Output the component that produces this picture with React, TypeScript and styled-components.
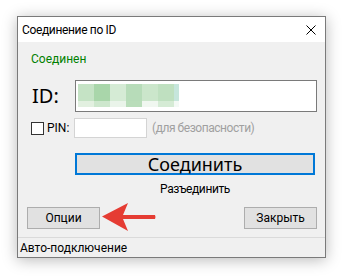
import React from 'react';
import styled, { createGlobalStyle } from 'styled-components';

const GlobalStyle = createGlobalStyle`
    html, body {
        margin: 0;
        padding: 0;
        background: #ffffff;
    }
    body {
        width: 347px;
        height: 280px;
        overflow: hidden;
        font-family: Roboto, "Noto Sans", sans-serif;
        font-size: 12px;
        color: #000;
    }
`;

const Page = styled.div`
    position: relative;
    width: 347px;
    height: 280px;
    padding: 16px 0 0 17px;
    box-sizing: border-box;
`;

const Window = styled.div`
    width: 309px;
    height: 242px;
    box-sizing: border-box;
    border: 1px solid #7a7a7a;
    background: #f0f0f0;
    box-shadow: 0 2px 14px rgba(0, 0, 0, 0.28);
    display: flex;
    flex-direction: column;
`;

const TitleBar = styled.div`
    height: 25px;
    background: #ffffff;
    display: flex;
    align-items: center;
    justify-content: space-between;
    padding: 0 9px 0 4px;
    flex-shrink: 0;
`;

const Title = styled.span`
    font-size: 12px;
    line-height: 16px;
    letter-spacing: -0.35px;
`;

const Body = styled.div`
    flex: 1;
    display: flex;
    flex-direction: column;
    padding: 9px 8px 0 13px;
`;

const Status = styled.div<{ color?: string }>`
    color: ${(p) => p.color || '#000'};
    font-size: 12px;
    line-height: 16px;
`;

const IdRow = styled.div`
    display: flex;
    align-items: center;
    margin-top: 13px;
`;

const IdLabel = styled.span`
    width: 43px;
    font-family: "Noto Sans", sans-serif;
    font-size: 20px;
    line-height: 24px;
    padding-left: 1px;
`;

const IdInput = styled.div`
    width: 242px;
    height: 32px;
    box-sizing: border-box;
    border: 1px solid #7a7a7a;
    background: #ffffff;
    padding: 2px;
`;

const Mosaic = styled.div`
    display: grid;
    grid-template-columns: repeat(6, 16px) 5px;
    grid-template-rows: 17px 6px;
    margin-top: 1px;
`;

const Cell = styled.div<{ $bg: string }>`
    background: ${(p) => p.$bg};
`;

const PinRow = styled.div`
    display: flex;
    align-items: center;
    margin-top: 6px;
`;

const Checkbox = styled.div`
    width: 13px;
    height: 13px;
    box-sizing: border-box;
    border: 1px solid #333333;
    background: #ffffff;
    margin-right: 3px;
`;

const PinLabel = styled.span`
    width: 27px;
    line-height: 16px;
`;

const PinInput = styled.div`
    width: 73px;
    height: 20px;
    box-sizing: border-box;
    border: 1px solid #d4d4d4;
    background: #ffffff;
    margin-right: 5px;
`;

const Hint = styled.span`
    color: #a0a0a0;
    line-height: 16px;
    letter-spacing: -0.45px;
`;

const ConnectArea = styled.div`
    display: flex;
    flex-direction: column;
    align-items: center;
    width: 240px;
    margin: 15px 0 0 44px;
`;

const Button = styled.div<{ $primary?: boolean; $width?: number }>`
    width: ${(p) => p.$width || 73}px;
    height: 22px;
    box-sizing: border-box;
    border: ${(p) => (p.$primary ? '2px solid #0078d7' : '1px solid #adadad')};
    background: #e1e1e1;
    display: flex;
    align-items: center;
    justify-content: center;
    font-family: ${(p) => (p.$primary ? '"Noto Sans", sans-serif' : 'inherit')};
    font-size: ${(p) => (p.$primary ? '18px' : '12px')};
    line-height: 16px;
`;

const Disconnect = styled.span`
    margin-top: 6px;
    line-height: 16px;
    letter-spacing: -0.4px;
`;

const ButtonRow = styled.div`
    display: flex;
    justify-content: space-between;
    margin: 10px 0 0 -4px;
`;

const StatusBar = styled.div`
    margin-top: auto;
    height: 19px;
    border-top: 1px solid #dadada;
    display: flex;
    align-items: center;
    padding-left: 2px;
    line-height: 16px;
`;

const Arrow = styled.svg`
    position: absolute;
    left: 101px;
    top: 203px;
`;

const mosaic = [
    '#c5e3c5', '#a9d6aa', '#d5ebd5', '#b7dcb9', '#cbe6cb', '#bfe0c0', '#c6e6dc',
    '#e2f0e0', '#cde7cd', '#eaf4ea', '#b9ddba', '#f0f7f0', '#d5ebd5', '#f3f9f5',
];

const App: React.FC = () => {
    return (
        <Page>
            <GlobalStyle />
            <Window>
                <TitleBar>
                    <Title>Соединение по ID</Title>
                    <svg width="10" height="10" viewBox="0 0 10 10">
                        <path d="M0.5 0.5 L9.5 9.5 M9.5 0.5 L0.5 9.5" stroke="#000" strokeWidth="1" />
                    </svg>
                </TitleBar>
                <Body>
                    <Status color="#008000">Соединен</Status>
                    <IdRow>
                        <IdLabel>ID:</IdLabel>
                        <IdInput>
                            <Mosaic>
                                {mosaic.map((c, i) => (
                                    <Cell key={i} $bg={c} />
                                ))}
                            </Mosaic>
                        </IdInput>
                    </IdRow>
                    <PinRow>
                        <Checkbox />
                        <PinLabel>PIN:</PinLabel>
                        <PinInput />
                        <Hint>(для безопасности)</Hint>
                    </PinRow>
                    <ConnectArea>
                        <Button $primary $width={240}>Соединить</Button>
                        <Disconnect>Разъединить</Disconnect>
                    </ConnectArea>
                    <ButtonRow>
                        <Button>Опции</Button>
                        <Button>Закрыть</Button>
                    </ButtonRow>
                </Body>
                <StatusBar>Авто-подключение</StatusBar>
            </Window>
            <Arrow width="56" height="29" viewBox="0 0 56 29">
                <path d="M1 13.5 L27 0 L22 12 L54 12 Q55 14 54 16 L22 16 L27 28 Z" fill="#e53c33" />
            </Arrow>
        </Page>
    );
};

export default App;
